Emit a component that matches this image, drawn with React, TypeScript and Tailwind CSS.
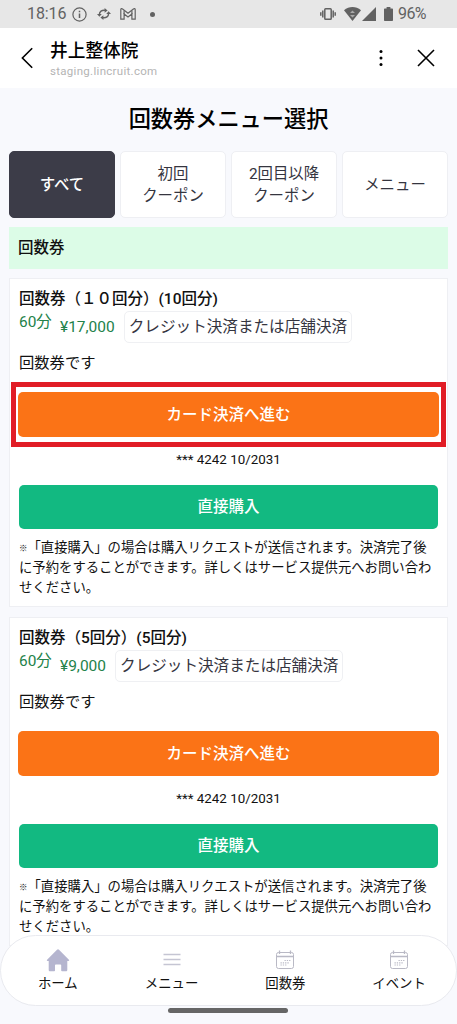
import React from "react";
import clsx from "clsx";

type TTicket = {
  id: number;
  title: string;
  price: string;
  highlighted: boolean;
};

const tabs = [
  { id: "all", lines: ["すべて"] },
  { id: "first", lines: ["初回", "クーポン"] },
  { id: "repeat", lines: ["2回目以降", "クーポン"] },
  { id: "menu", lines: ["メニュー"] },
];

const tickets: TTicket[] = [
  { id: 1, title: "回数券（１０回分）(10回分)", price: "¥17,000", highlighted: true },
  { id: 2, title: "回数券（5回分）(5回分)", price: "¥9,000", highlighted: false },
];

const StatusBar = () => (
  <div className="flex h-7 items-center bg-[#e7e7e7] pl-[27px] text-[#626262]">
    <span className="w-[41px] text-[16px] leading-7 tracking-[-0.1px]">18:16</span>
    <svg className="ml-[4px] h-[15px] w-[15px]" viewBox="0 0 15 15" fill="none" stroke="currentColor">
      <circle cx="7.5" cy="7.5" r="6.6" strokeWidth="1.2" />
      <path d="M7.5 6.6v4.4M7.5 3.8v1.4" strokeWidth="1.5" />
    </svg>
    <svg className="ml-[10px] h-[14px] w-[14px]" viewBox="0 0 14 14" fill="none" stroke="currentColor" strokeWidth="1.4">
      <path d="M2.4 7.6C2.4 4.6 4.8 2.9 8 3.3M11.6 6.4C11.6 9.4 9.2 11.1 6 10.7" />
      <path d="M7.6 1.1l3 2.3-3 2.3zM6.4 12.9l-3-2.3 3-2.3zM0 7.1l2.4 2.7 2.4-2.7zM14 6.9l-2.4-2.7-2.4 2.7z" fill="currentColor" stroke="none" />
    </svg>
    <svg className="ml-[9px] h-[12px] w-[16px]" viewBox="0 0 16 12" fill="none" stroke="currentColor" strokeWidth="1.2">
      <path d="M0.8 11.2V1.6C0.8 0.5 1.8 0.4 2.6 1L8 5.2 13.4 1c.8-.6 1.8-.5 1.8.6v9.6h-3.3V6L8 9 4.1 6v5.2z" />
      <path d="M4.1 2.4V6M11.9 2.4V6" />
    </svg>
    <span className="ml-[14px] h-[5px] w-[5px] rounded-full bg-[#626262]" />
    <svg className="ml-auto h-[12px] w-[16px]" viewBox="0 0 16 12" fill="none" stroke="currentColor" strokeWidth="1.5">
      <rect x="4.8" y="0.8" width="6.4" height="10.4" rx="0.8" />
      <path d="M2.8 2.5v7M13.2 2.5v7M0.8 4.2v3.6M15.2 4.2v3.6" />
    </svg>
    <svg className="ml-[8px] h-[14px] w-[17px]" viewBox="0 0 17 14" fill="currentColor">
      <path d="M0 3.3C5-1.1 12-1.1 17 3.3L8.5 14z" />
      <path d="M6 6l2.5-2.6L11 6zM6 8h5l-2.5 2.6z" fill="#aaa" />
    </svg>
    <svg className="ml-[1px] h-[14px] w-[14px]" viewBox="0 0 14 14" fill="currentColor">
      <path d="M14 0v14H0z" />
    </svg>
    <svg className="ml-[8px] h-[14px] w-[9px]" viewBox="0 0 9 14" fill="currentColor">
      <path d="M2.6 0h3.8v1.4H8c.6 0 1 .4 1 1V13c0 .6-.4 1-1 1H1c-.6 0-1-.4-1-1V2.4c0-.6.4-1 1-1h1.6z" />
    </svg>
    <span className="mr-[30px] ml-[5px] w-[29px] text-[16px] leading-7 tracking-[-0.6px]">96%</span>
  </div>
);

const Header = () => (
  <header className="flex h-[60px] items-center bg-white pl-[21px] text-black">
    <svg className="h-[22px] w-[12px]" viewBox="0 0 12 22" fill="none" stroke="currentColor" strokeWidth="1.6">
      <path d="M11.2 1.2L1.4 11l9.8 9.8" />
    </svg>
    <div className="ml-[17px] flex-1 pt-[2px]">
      <p className="text-[17.7px] leading-[24px] font-medium">井上整体院</p>
      <p className="text-[11.5px] leading-[16px] tracking-[0.3px] text-[#b4b4b4]">staging.lincruit.com</p>
    </div>
    <svg className="mr-[34px] h-[18px] w-[4px]" viewBox="0 0 4 18" fill="currentColor">
      <circle cx="2" cy="2.5" r="1.5" />
      <circle cx="2" cy="9" r="1.5" />
      <circle cx="2" cy="15.5" r="1.5" />
    </svg>
    <svg className="mr-[22px] h-[18px] w-[18px]" viewBox="0 0 18 18" fill="none" stroke="currentColor" strokeWidth="1.6">
      <path d="M1 1l16 16M17 1L1 17" />
    </svg>
  </header>
);

const TicketCard = ({ ticket }: { ticket: TTicket }) => (
  <article className="h-[329px] border border-[#eeeff3] bg-white px-[9px] pt-[9px]">
    <h3 className="text-[15.5px] leading-[22px] font-medium">{ticket.title}</h3>
    <div className="flex h-[34px] items-center">
      <span className="-mt-[9px] w-[41px] text-[15.4px] text-[#23824a]">60分</span>
      <span className="pt-[2px] text-[15.5px] text-[#23824a]">{ticket.price}</span>
      <span className="ml-[9px] flex h-[32px] items-center rounded-[5px] border border-[#eff0f3] px-[4px] pt-[2px] text-[15.6px] text-[#35353f]">
        クレジット決済または店舗決済
      </span>
    </div>
    <p className="mt-[7px] text-[15.3px] leading-[24px]">回数券です</p>
    {/* the frame reaches past the button, so it eats into the surrounding spacing */}
    <div
      className={clsx(
        "-mx-[8px] mt-[7px] h-[65px] border-[5px] px-[2px] pt-[5px]",
        ticket.highlighted ? "border-[#e11d26]" : "border-transparent",
      )}
    >
      <button className="block h-[45px] w-full rounded-[5px] bg-[#fb7316] pt-[2px] text-[15.5px] font-medium text-white">
        カード決済へ進む
      </button>
    </div>
    <p className="mt-[3px] text-center text-[13.35px] leading-[20px]">*** 4242 10/2031</p>
    <button className="mt-[15px] block h-[44px] w-full rounded-[5px] bg-[#12b981] pt-[2px] text-[15.5px] font-medium text-white">
      直接購入
    </button>
    <p className="mt-[9px] text-[13.35px] leading-[19.9px]">
      <span className="align-[1px] text-[8.5px] leading-none">※</span>
      「直接購入」の場合は購入リクエストが送信されます。決済完了後
      <br />
      に予約をすることができます。詳しくはサービス提供元へお問い合わ
      <br />
      せください。
    </p>
  </article>
);

const HomeIcon = () => (
  <svg className="h-[24px] w-[24px]" viewBox="0 0 24 24" fill="#b5b5cf">
    <path d="M12 1.2c.4 0 .7.2 1 .5l9.9 10.1c.6.7.3 1.2-.4 1.2h-1.2v9c0 .8-.5 1.3-1.3 1.3h-4c-.5 0-.8-.3-.8-.8v-5.300c0-.5-.3-.8-.8-.8H9.800c-.5 0-.8.3-.8.8v5.300c0 .5-.3.8-.8.8H4c-.8 0-1.300-.5-1.300-1.300v-9H1.500c-.7 0-1-.5-.4-1.200L11 1.700c.3-.3.6-.5 1-.5z" />
  </svg>
);

const MenuIcon = () => (
  <svg className="h-[24px] w-[24px]" viewBox="0 0 24 24" stroke="#c5c5d3" strokeWidth="1.3">
    <path d="M3.5 6.5h17M3.5 11.5h17M3.5 16.5h17" />
  </svg>
);

const CalendarIcon = () => (
  <svg className="h-[24px] w-[24px]" viewBox="0 0 24 24" fill="none" stroke="#b9b9c5">
    <rect x="3.5" y="4.5" width="17" height="16" rx="2" />
    <path d="M3.5 8.5h17M6.5 2.5v3.5M17.5 2.5v3.5" strokeWidth="1.3" />
    <path d="M11.5 12.5h6M7.5 14.8h9M7.5 17h6" strokeWidth="1.2" strokeDasharray="1.3 1" />
  </svg>
);

const navItems = [
  { label: "ホーム", icon: HomeIcon },
  { label: "メニュー", icon: MenuIcon },
  { label: "回数券", icon: CalendarIcon },
  { label: "イベント", icon: CalendarIcon },
];

const BottomNav = () => (
  <nav className="absolute top-[935px] left-0 flex h-[71px] w-full rounded-full border border-[#e9eaef] bg-white pt-[12px]">
    {navItems.map(({ label, icon: Icon }) => (
      <a key={label} className="flex flex-1 flex-col items-center">
        <Icon />
        <span className="mt-[2px] text-[13.4px] leading-[20px]">{label}</span>
      </a>
    ))}
  </nav>
);

const App = () => {
  return (
    <div className="relative h-[1024px] w-[457px] overflow-hidden bg-[#f8f9fd] font-['Roboto','Noto_Sans_CJK_JP',sans-serif] text-[#111]">
      <StatusBar />
      <Header />
      <main className="px-[9px]">
        <h1 className="pt-[15px] text-center text-[22.2px] leading-[32px] font-medium text-black">
          回数券メニュー選択
        </h1>
        <div className="mt-[16px] grid h-[67px] grid-cols-4 gap-[5px]">
          {tabs.map((tab) => (
            <button
              key={tab.id}
              className={clsx(
                "rounded-[5px] border pt-px text-[15.4px] leading-[22px]",
                tab.id === "all"
                  ? "border-[#3c3c48] bg-[#3c3c48] font-medium text-white"
                  : "border-[#eeeff3] bg-white text-[#35353f]",
              )}
            >
              {tab.lines.map((line) => (
                <span key={line} className="block">
                  {line}
                </span>
              ))}
            </button>
          ))}
        </div>
        <h2 className="mt-[9px] h-[42px] bg-[#dcfce7] pl-[9px] text-[15.5px] leading-[42px] font-medium">
          回数券
        </h2>
        <div className="mt-[9px] flex flex-col gap-[10px]">
          {tickets.map((ticket) => (
            <TicketCard key={ticket.id} ticket={ticket} />
          ))}
        </div>
      </main>
      <BottomNav />
      <div className="absolute top-[1008px] left-[168px] h-[5px] w-[120px] rounded-full bg-[#666]" />
    </div>
  );
};

export default App;
